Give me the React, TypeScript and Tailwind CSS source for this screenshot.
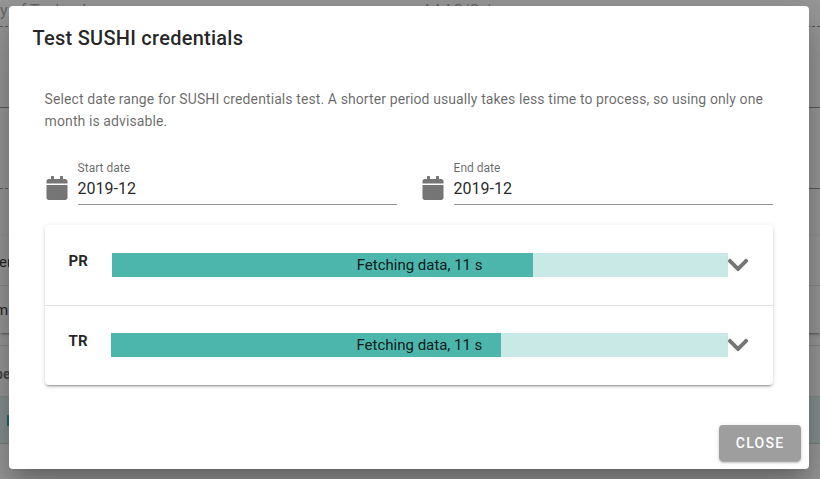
import React from 'react';
import { FaCalendar, FaChevronDown } from 'react-icons/fa';

function DateField({ label, value }: { label: string; value: string }) {
  return (
    <label className="flex flex-1">
      <FaCalendar className="mt-[14px] mr-[9px] size-6 shrink-0 text-[#757575]" />
      <span className="flex h-[43px] flex-1 flex-col border-b border-[#949494]">
        <span className="h-3 text-xs leading-[12px] text-black/60">{label}</span>
        <span className="mt-[5px] text-base leading-5 text-black/87">{value}</span>
      </span>
    </label>
  );
}

function ReportRow({ code, percent }: { code: string; percent: number }) {
  return (
    <div className="flex h-20 items-center px-6 shadow-[inset_0_1px_0_rgba(0,0,0,0.12)] first:shadow-none">
      <strong className="mr-[23.7px] pb-2 text-[15px] leading-4 font-bold">{code}</strong>
      <div className="grid h-6 flex-1 bg-[#c9e9e6]">
        <div className="col-start-1 row-start-1 bg-[#4db6ac]" style={{ width: `${percent}%` }} />
        <span className="z-10 col-start-1 row-start-1 text-center text-[15px] leading-6">Fetching data, 11 s</span>
      </div>
      <FaChevronDown className="-mr-px -ml-[2px] size-6 shrink-0 text-[#757575]" />
    </div>
  );
}

function BackgroundPage() {
  return (
    <div className="flex h-full flex-col overflow-hidden bg-white text-sm text-black/87">
      <div className="flex h-[27px] shrink-0 border-b border-dashed border-black/45 text-base leading-[22px] text-black/40">
        <span className="w-[422px] whitespace-nowrap">y of Technology</span>
        <span>AAAS/Science</span>
      </div>
      <div className="h-[81px] shrink-0 border-b border-black/45" />
      <div className="flex h-[81px] shrink-0">
        <div className="w-1/2 border-b border-dashed border-black/45" />
        <div className="w-1/2 border-b border-black/45" />
      </div>
      <div className="mt-[47px] shrink-0 shadow-[0_3px_1px_-2px_rgba(0,0,0,0.2),0_2px_2px_rgba(0,0,0,0.14),0_1px_5px_rgba(0,0,0,0.12)]">
        <div className="h-[50px] border-b border-black/12 text-[15px] leading-[52px]"><span className="-ml-px">er</span></div>
        <div className="h-[47px] text-[15px] leading-[48px]"><span className="-ml-[5px]">m</span></div>
      </div>
      <div className="mt-3 h-[52px] shrink-0 border-t border-b border-black/12 text-sm leading-[56px] font-bold text-black/60">
        <span className="-ml-[5px]">pe</span>
      </div>
      <div className="flex h-[47px] shrink-0 items-center border-b border-black/12 bg-[#e0f2f1] pl-[7px]">
        <div className="h-[11px] w-4 bg-[#26a69a]" />
      </div>
    </div>
  );
}

export default function App() {
  return (
    <div className="relative h-[479px] w-[820px] overflow-hidden font-[Roboto,sans-serif]">
      <BackgroundPage />
      <div className="absolute inset-0 bg-[#212121]/46" />
      <section
        role="dialog"
        className="absolute top-[6px] left-[8.6px] flex h-[463px] w-[800px] flex-col rounded bg-white text-black/87 shadow-[0_11px_15px_-7px_rgba(0,0,0,0.2),0_24px_38px_3px_rgba(0,0,0,0.14),0_9px_46px_8px_rgba(0,0,0,0.12)]"
      >
        <h1 className="px-6 pt-4 text-xl leading-8 font-medium tracking-[0.0125em]">Test SUSHI credentials</h1>
        <div className="flex flex-1 flex-col px-9 pt-[34px]">
          <p className="text-sm leading-[22px] tracking-[0.0071428571em] text-black/60">
            Select date range for SUSHI credentials test. A shorter period usually takes less time to process, so using only one month is advisable.
          </p>
          <div className="mt-[30px] flex gap-6">
            <DateField label="Start date" value="2019-12" />
            <DateField label="End date" value="2019-12" />
          </div>
          <div className="mt-5 h-40 rounded shadow-[0_3px_1px_-2px_rgba(0,0,0,0.2),0_2px_2px_rgba(0,0,0,0.14),0_1px_5px_rgba(0,0,0,0.12)]">
            <ReportRow code="PR" percent={68.4} />
            <ReportRow code="TR" percent={63.2} />
          </div>
        </div>
        <footer className="flex justify-end p-2">
          <button className="h-9 w-[82px] rounded bg-[#9e9e9e] pl-px text-sm font-medium tracking-[0.0892857143em] text-white uppercase shadow-[0_3px_1px_-2px_rgba(0,0,0,0.2),0_2px_2px_rgba(0,0,0,0.14),0_1px_5px_rgba(0,0,0,0.12)]">
            Close
          </button>
        </footer>
      </section>
    </div>
  );
}
